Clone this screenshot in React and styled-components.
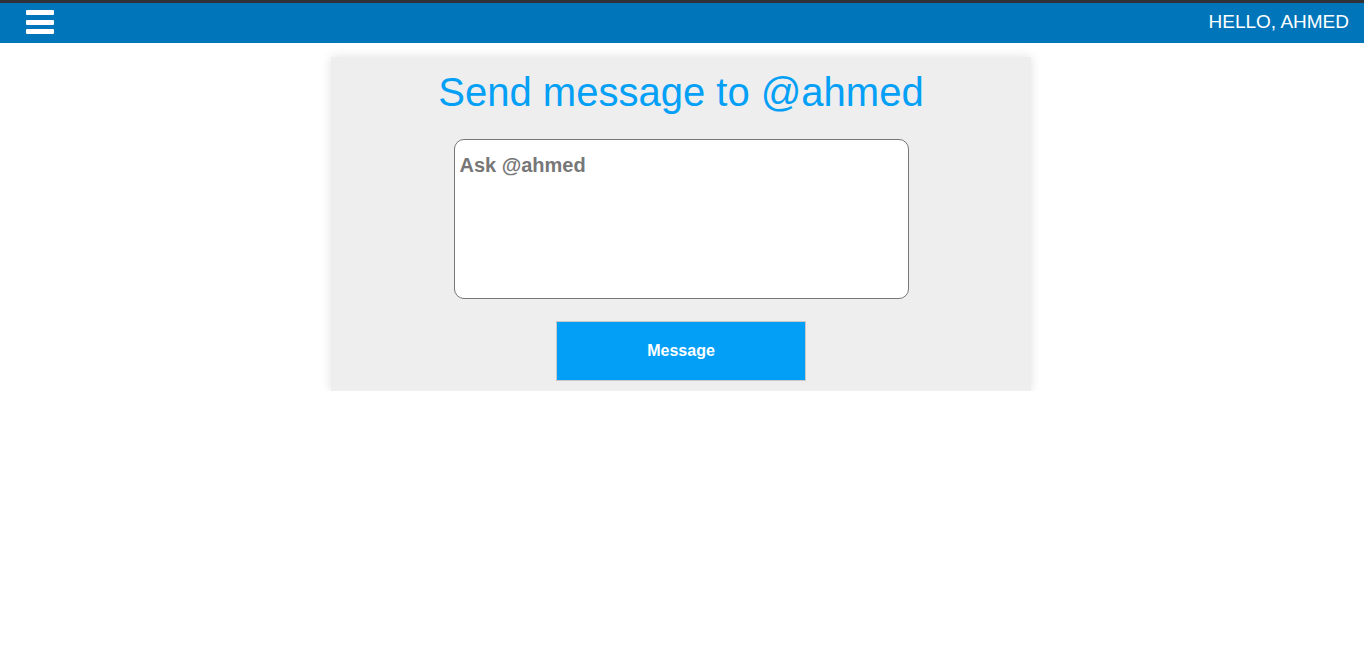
import React from "react";
import styled, { createGlobalStyle } from "styled-components";

const Global = createGlobalStyle`
  html, body { margin: 0; padding: 0; background: #fff; }
  body { font-family: "Liberation Sans", Arial, sans-serif; }
  * { box-sizing: border-box; }
`;

const Header = styled.header`
  height: 43px;
  background: #0075ba;
  border-top: 3px solid #2f3338;
  display: flex;
  align-items: center;
  justify-content: space-between;
  padding: 0 15px 0 26px;
`;

const MenuButton = styled.button`
  width: 28px;
  height: 24px;
  padding: 0;
  border: none;
  background: transparent;
  display: flex;
  flex-direction: column;
  justify-content: space-between;
  margin-top: -2px;
  cursor: pointer;
`;

const Bar = styled.span`
  display: block;
  height: 5px;
  width: 100%;
  background: #fff;
  border-radius: 1px;
`;

const Greeting = styled.div`
  color: #fff;
  font-size: 19px;
  text-transform: uppercase;
  margin-top: -2px;
`;

const Main = styled.main`
  display: flex;
  justify-content: center;
  padding: 14px 2px 0 0;
`;

const Card = styled.section`
  width: 700px;
  background: #eeeeee;
  box-shadow: 0 0 10px rgba(0, 0, 0, 0.12);
  display: flex;
  flex-direction: column;
  align-items: center;
  padding: 12px 0 10px;
`;

const Title = styled.h1`
  margin: 0;
  font-weight: normal;
  font-size: 40px;
  line-height: 46px;
  color: #03a0f6;
`;

const MessageBox = styled.textarea`
  margin-top: 24px;
  width: 455px;
  height: 160px;
  border: 1px solid #777;
  border-radius: 10px;
  background: #fff;
  padding: 14px 5px 5px;
  font-family: "Liberation Sans", Arial, sans-serif;
  font-size: 20px;
  font-weight: bold;
  resize: none;
  outline: none;
  &::placeholder { color: #777; opacity: 1; }
`;

const SendButton = styled.button`
  margin-top: 22px;
  width: 250px;
  height: 60px;
  background: #039ff7;
  border: 1px solid #c8c8c8;
  color: #fff;
  font-family: "Liberation Sans", Arial, sans-serif;
  font-weight: bold;
  font-size: 16px;
  cursor: pointer;
`;

export default function App() {
  return (
    <>
      <Global />
      <Header>
        <MenuButton aria-label="menu">
          <Bar />
          <Bar />
          <Bar />
        </MenuButton>
        <Greeting>Hello, Ahmed</Greeting>
      </Header>
      <Main>
        <Card>
          <Title>Send message to @ahmed</Title>
          <MessageBox placeholder="Ask @ahmed" />
          <SendButton>Message</SendButton>
        </Card>
      </Main>
    </>
  );
}
